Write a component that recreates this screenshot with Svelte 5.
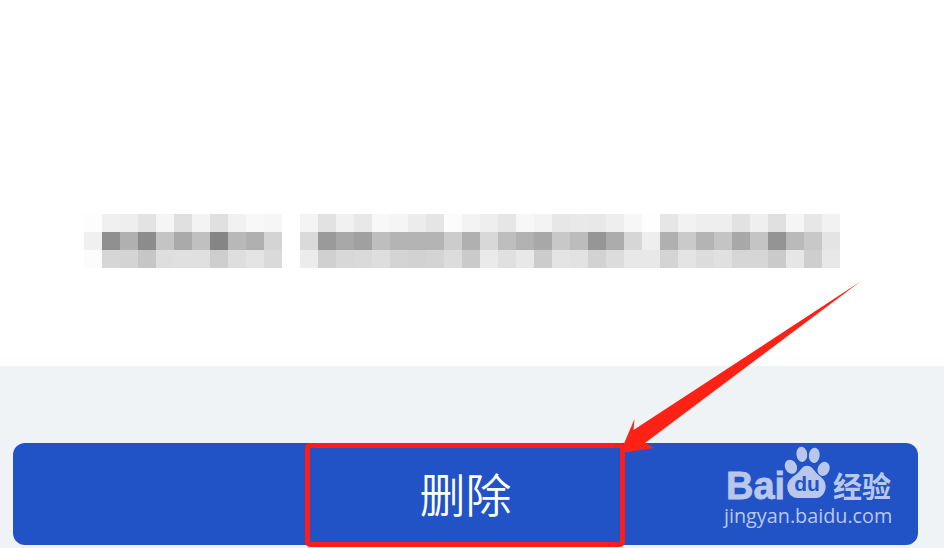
<script>
  const rows = [
    ['fdfdfd','f0f0f0','eeeeee','e3e3e3','f5f5f5','e0e0e0','f3f3f3','e0e0e0','f1f1f1','f8f8f8','f6f6f6','fff','f4f4f4','e2e2e2','f1f1f1','e8e8e8','f8f8f8','f5f5f5','ececec','e5e5e5','fcfcfc','f3f3f3','eeeeee','e6e6e6','f7f7f7','f3f3f3','e7e7e7','e9e9e9','e8e8e8','eeeeee','f7f7f7','fefefe','e6e6e6','f2f2f2','eeeeee','eeeeee','e2e2e2','efefef','e0e0e0','f5f5f5','e7e7e7','f2f2f2'],
    ['f0f0f0','909090','b0b0b0','8c8c8c','c4c4c4','aaaaaa','c0c0c0','858585','b8b8b8','b0b0b0','d4d4d4','fff','dadada','9a9a9a','a8a8a8','a0a0a0','bebebe','b4b4b4','b4b4b4','b4b4b4','cccccc','b0b0b0','d8d8d8','bebebe','b2b2b2','a8a8a8','c8c8c8','bcbcbc','969696','acacac','d6d6d6','eeeeee','b0b0b0','cacaca','b4b4b4','c4c4c4','a8a8a8','c4c4c4','949494','bababa','c8c8c8','e4e4e4'],
    ['fcfcfc','d6d6d6','d4d4d4','c6c6c6','dedede','e0e0e0','e0e0e0','cecece','dedede','e4e4e4','dadada','fff','ececec','d0d0d0','d8d8d8','dadada','dedede','d4d4d4','d2d2d2','d4d4d4','dcdcdc','cacaca','eaeaea','e0e0e0','e8e8e8','cccccc','e4e4e4','e2e2e2','d2d2d2','dcdcdc','e8e8e8','e8e8e8','d4d4d4','e4e4e4','dcdcdc','e0e0e0','d6d6d6','d6d6d6','cacaca','e6e6e6','cecece','e8e8e8']
  ];
</script>

<div class="page">
  <section class="top">
    <div class="mosaic" aria-hidden="true">
      {#each rows as row}
        {#each row as c}
          <i style={`background:#${c}`}></i>
        {/each}
      {/each}
    </div>
  </section>

  <section class="bottom">
    <button class="delete" type="button">删除</button>
  </section>

  <div class="frame"></div>

  <svg class="arrow" viewBox="0 0 944 548" width="944" height="548" aria-hidden="true">
    <polygon points="860.5,281.5 645,443 654.5,448 620,453 634.5,419 633.5,430" fill="#fe2115" />
  </svg>

  <div class="logo">
    <div class="brand">
      <span class="bai">Bai</span>
      <span class="paw">
        <svg viewBox="0 0 44 52" width="48" height="54" aria-hidden="true">
          <ellipse cx="6.5" cy="20" rx="5.6" ry="7" transform="rotate(-28 6.5 20)" />
          <ellipse cx="17" cy="8" rx="5.2" ry="7.4" transform="rotate(-6 17 8)" />
          <ellipse cx="29" cy="9" rx="5.2" ry="7.4" transform="rotate(6 29 9)" />
          <ellipse cx="38" cy="22" rx="5.6" ry="7" transform="rotate(24 38 22)" />
          <path d="M22 19c4 0 6 3 9 7 3 3 9 6 9 13 0 7-5 11-9 11H13c-5 0-10-4-10-11 0-6 6-10 9-12 4-3 5-8 10-8z" />
        </svg>
        <span class="du">du</span>
      </span>
      <span class="jy">经验</span>
    </div>
    <div class="url">jingyan.baidu.com</div>
  </div>
</div>

<style>
  :global(body) {
    margin: 0;
    background: #fff;
  }
  .page {
    position: relative;
    width: 944px;
    height: 548px;
    overflow: hidden;
    display: flex;
    flex-direction: column;
    font-family: "Noto Sans CJK SC", "Liberation Sans", sans-serif;
  }
  .top {
    height: 366px;
    background: #fff;
    padding: 214px 0 0 84px;
    box-sizing: border-box;
  }
  .mosaic {
    display: grid;
    grid-template-columns: repeat(42, 18px);
    grid-auto-rows: 18px;
    width: 756px;
  }
  .mosaic i {
    display: block;
  }
  .bottom {
    flex: 1;
    background: #eff3f6;
    padding: 77px 26px 3px 13px;
    display: flex;
    box-sizing: border-box;
  }
  .delete {
    flex: 1;
    border: 0;
    margin: 0;
    padding: 0 0 5px;
    border-radius: 12px;
    background: #2253c6;
    color: #fff;
    font: 350 46px/1 "Noto Sans CJK SC", sans-serif;
  }
  .frame {
    position: absolute;
    left: 305px;
    top: 443px;
    width: 320px;
    height: 104px;
    box-sizing: border-box;
    border: 5px solid #fe1c1c;
    border-radius: 5px;
  }
  .arrow {
    position: absolute;
    left: 0;
    top: 0;
  }
  .logo {
    position: absolute;
    left: 724px;
    top: 446px;
    width: 172px;
    color: #b9c8ea;
  }
  .brand {
    display: flex;
    align-items: flex-end;
    height: 54px;
  }
  .bai {
    font: 700 38px/28px "Liberation Sans", sans-serif;
    -webkit-text-stroke: 0.8px #b9c8ea;
    width: 59px;
    padding-left: 2px;
    flex: none;
    box-sizing: border-box;
  }
  .paw {
    position: relative;
    width: 48px;
    height: 54px;
    flex: none;
    margin-right: 1px;
  }
  .paw svg {
    fill: #b9c8ea;
    display: block;
  }
  .du {
    position: absolute;
    left: 8px;
    top: 28px;
    width: 32px;
    text-align: center;
    color: #2253c6;
    font: 700 21px/20px "Liberation Sans", sans-serif;
  }
  .jy {
    font: 700 29px/30px "Noto Sans CJK SC", sans-serif;
    margin-left: 1px;
    white-space: nowrap;
  }
  .url {
    font: 400 19.8px/22px "Open Sans", sans-serif;
    margin-top: 5px;
    white-space: nowrap;
  }
</style>
